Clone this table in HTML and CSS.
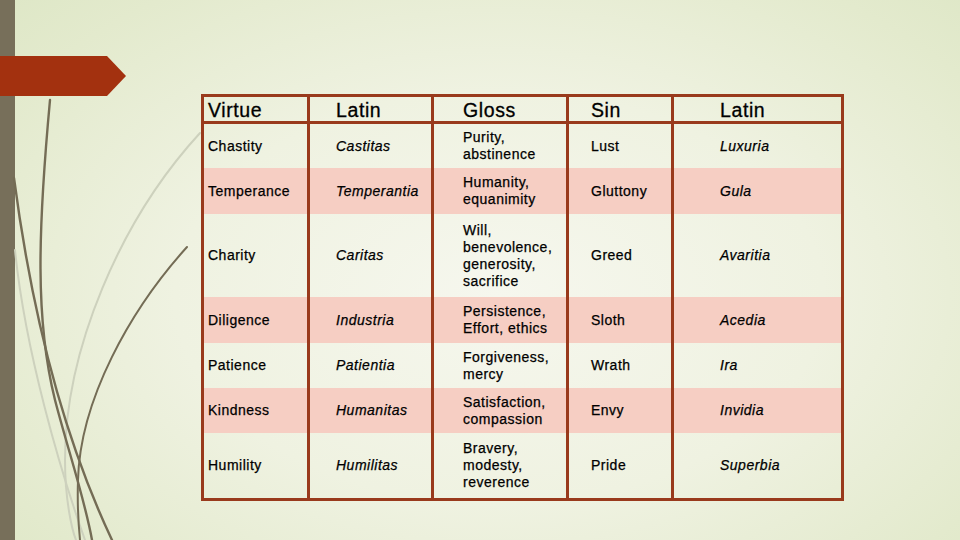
FILE: index.html
```html
<!DOCTYPE html>
<html>
<head>
<meta charset="utf-8">
<link rel="stylesheet" href="styles.css">
</head>
<body>
<div class="slide">
  <div class="bar"></div>
  <svg class="deco" width="260" height="540" viewBox="0 0 260 540">
    <path class="light" d="M200,133 C120,220 65,350 65,460 C65,500 72,530 76,540"/>
    <path class="light" d="M15,250 C25,350 60,470 85,540"/>
    <path class="dark" d="M14,178 C30,300 60,430 112,540"/>
    <path class="dark" d="M50,100 C38,230 35,320 55,400 C68,450 85,500 92,540"/>
    <path class="dark thin" d="M187,247 C130,310 80,400 78,480 C77,510 79,530 80,540"/>
    <polygon class="arrow" points="0,56 107,56 126,76 107,96 0,96"/>
  </svg>
  <table class="vt">
    <colgroup>
      <col class="c1"><col class="c2"><col class="c3"><col class="c4"><col class="c5">
    </colgroup>
    <thead>
      <tr>
        <th class="p1">Virtue</th>
        <th class="p2">Latin</th>
        <th class="p3">Gloss</th>
        <th class="p4">Sin</th>
        <th class="p5">Latin</th>
      </tr>
    </thead>
    <tbody>
      <tr class="r1">
        <td class="p1">Chastity</td>
        <td class="p2 it">Castitas</td>
        <td class="p3">Purity,<br>abstinence</td>
        <td class="p4">Lust</td>
        <td class="p5 it">Luxuria</td>
      </tr>
      <tr class="r2 pink">
        <td class="p1">Temperance</td>
        <td class="p2 it">Temperantia</td>
        <td class="p3">Humanity,<br>equanimity</td>
        <td class="p4">Gluttony</td>
        <td class="p5 it">Gula</td>
      </tr>
      <tr class="r3">
        <td class="p1">Charity</td>
        <td class="p2 it">Caritas</td>
        <td class="p3">Will,<br>benevolence,<br>generosity,<br>sacrifice</td>
        <td class="p4">Greed</td>
        <td class="p5 it">Avaritia</td>
      </tr>
      <tr class="r4 pink">
        <td class="p1">Diligence</td>
        <td class="p2 it">Industria</td>
        <td class="p3">Persistence,<br>Effort, ethics</td>
        <td class="p4">Sloth</td>
        <td class="p5 it">Acedia</td>
      </tr>
      <tr class="r5">
        <td class="p1">Patience</td>
        <td class="p2 it">Patientia</td>
        <td class="p3">Forgiveness,<br>mercy</td>
        <td class="p4">Wrath</td>
        <td class="p5 it">Ira</td>
      </tr>
      <tr class="r6 pink">
        <td class="p1">Kindness</td>
        <td class="p2 it">Humanitas</td>
        <td class="p3">Satisfaction,<br>compassion</td>
        <td class="p4">Envy</td>
        <td class="p5 it">Invidia</td>
      </tr>
      <tr class="r7">
        <td class="p1">Humility</td>
        <td class="p2 it">Humilitas</td>
        <td class="p3">Bravery,<br>modesty,<br>reverence</td>
        <td class="p4">Pride</td>
        <td class="p5 it">Superbia</td>
      </tr>
    </tbody>
  </table>
</div>
</body>
</html>
```
FILE: styles.css
```css
html, body {
  margin: 0;
  padding: 0;
}
body {
  width: 960px;
  height: 540px;
  overflow: hidden;
}
.slide {
  position: relative;
  width: 960px;
  height: 540px;
  box-sizing: border-box;
  padding: 94px 0 0 201px;
  background: radial-gradient(ellipse 75% 85% at 52% 55%, #f6f7ee 0%, #eff2e1 45%, #e3eacd 80%, #dce6c4 100%);
  font-family: "Liberation Sans", Arial, sans-serif;
  color: #000;
}
.bar {
  position: absolute;
  left: 0;
  top: 0;
  width: 15px;
  height: 540px;
  background: #776f5a;
}
.deco {
  position: absolute;
  left: 0;
  top: 0;
}
.deco path {
  fill: none;
  stroke-linecap: round;
}
.deco .dark {
  stroke: #746c55;
  stroke-width: 2.4;
}
.deco .dark.thin {
  stroke-width: 2;
}
.deco .light {
  stroke: #cdd1bd;
  stroke-width: 2;
}
.deco .arrow {
  fill: #a3310f;
}
.vt {
  position: relative;
  box-sizing: border-box;
  width: 643px;
  table-layout: fixed;
  border-collapse: separate;
  border-spacing: 0;
  border: 3px solid #993a1c;
}
.c1 { width: 106px; }
.c2 { width: 124px; }
.c3 { width: 135px; }
.c4 { width: 105px; }
.c5 { width: 167px; }
.vt th, .vt td {
  padding: 0;
  text-align: left;
  vertical-align: middle;
  border-right: 3px solid #993a1c;
  box-sizing: border-box;
  font-weight: normal;
}
.vt th:last-child, .vt td:last-child {
  border-right: none;
}
.vt th {
  height: 27px;
  font-size: 19.5px;
  letter-spacing: 0.6px;
  line-height: 22px;
  border-bottom: 3px solid #993a1c;
  padding-top: 1px;
  -webkit-text-stroke: 0.3px #000;
}
.vt td {
  font-size: 14px;
  letter-spacing: 0.5px;
  line-height: 17px;
  -webkit-text-stroke: 0.25px #000;
}
.vt .it {
  font-style: italic;
}
.pink td {
  background: #f6cec3;
}
.r1 td { height: 44px; }
.r2 td { height: 46px; }
.r3 td { height: 83px; }
.r4 td { height: 46px; }
.r5 td { height: 45px; }
.r6 td { height: 45px; }
.r7 td { height: 65px; }
.p1 { padding-left: 4px !important; }
.p2 { padding-left: 26px !important; }
.p3 { padding-left: 29px !important; }
.p4 { padding-left: 22px !important; }
.p5 { padding-left: 46px !important; }
```
